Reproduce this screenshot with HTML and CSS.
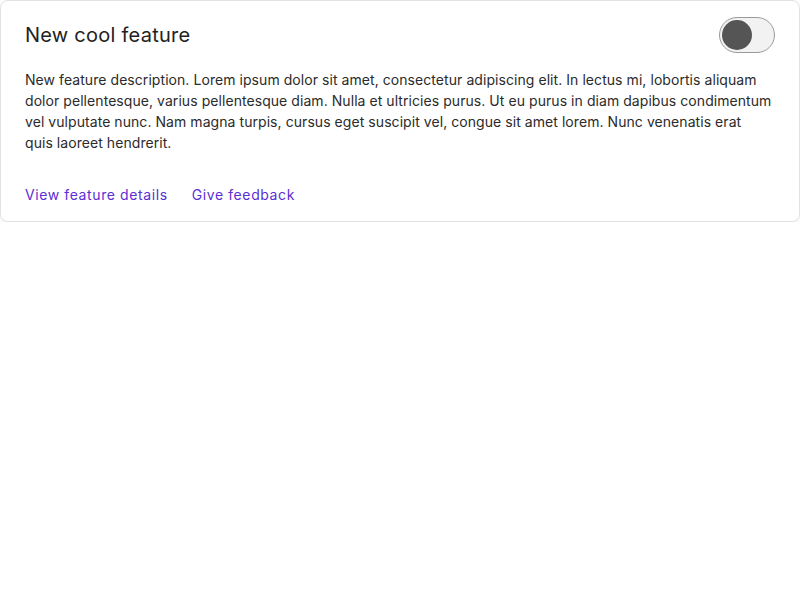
FILE: index.html
```html
<!DOCTYPE html>
<html>
<head>
<meta charset="utf-8">
<link rel="stylesheet" href="styles.css">
</head>
<body>
<div class="card">
  <div class="card-header">
    <h2 class="title">New cool feature</h2>
    <span class="toggle"><span class="knob"></span></span>
  </div>
  <p class="desc">New feature description. Lorem ipsum dolor sit amet, consectetur adipiscing elit. In lectus mi, lobortis aliquam dolor pellentesque, varius pellentesque diam. Nulla et ultricies purus. Ut eu purus in diam dapibus condimentum vel vulputate nunc. Nam magna turpis, cursus eget suscipit vel, congue sit amet lorem. Nunc venenatis erat<br>quis laoreet hendrerit.</p>
  <div class="links">
    <a class="link" href="#">View feature details</a>
    <a class="link" href="#">Give feedback</a>
  </div>
</div>
</body>
</html>
```
FILE: styles.css
```css
html, body {
  margin: 0;
  padding: 0;
  background: #fff;
}
body {
  font-family: Inter, "Liberation Sans", sans-serif;
  color: #2b2b2b;
}
.card {
  border: 1px solid #e2e2e2;
  border-radius: 8px;
  padding: 16px 24px 16px 24px;
  box-shadow: 0 4px 12px rgba(0, 0, 0, 0.06);
  background: #fff;
}
.card-header {
  display: flex;
  align-items: center;
  justify-content: space-between;
}
.title {
  margin: 0;
  font-size: 20px;
  font-weight: 400;
  letter-spacing: 0.25px;
  color: #222;
}
.toggle {
  box-sizing: border-box;
  width: 56px;
  height: 36px;
  border: 1px solid #9a9a9a;
  border-radius: 18px;
  background: #f2f2f2;
  display: flex;
  align-items: center;
  padding-left: 2px;
}
.knob {
  width: 30px;
  height: 30px;
  border-radius: 50%;
  background: #555;
}
.desc {
  margin: 16px 0 0;
  font-size: 14px;
  line-height: 21px;
  letter-spacing: 0.06px;
  color: #2b2b2b;
}
.links {
  margin-top: 31px;
  display: flex;
  gap: 24px;
}
.link {
  font-size: 14px;
  line-height: 21px;
  font-weight: 400;
  color: #5b2fd4;
  text-decoration: none;
  letter-spacing: 0.6px;
}
```
